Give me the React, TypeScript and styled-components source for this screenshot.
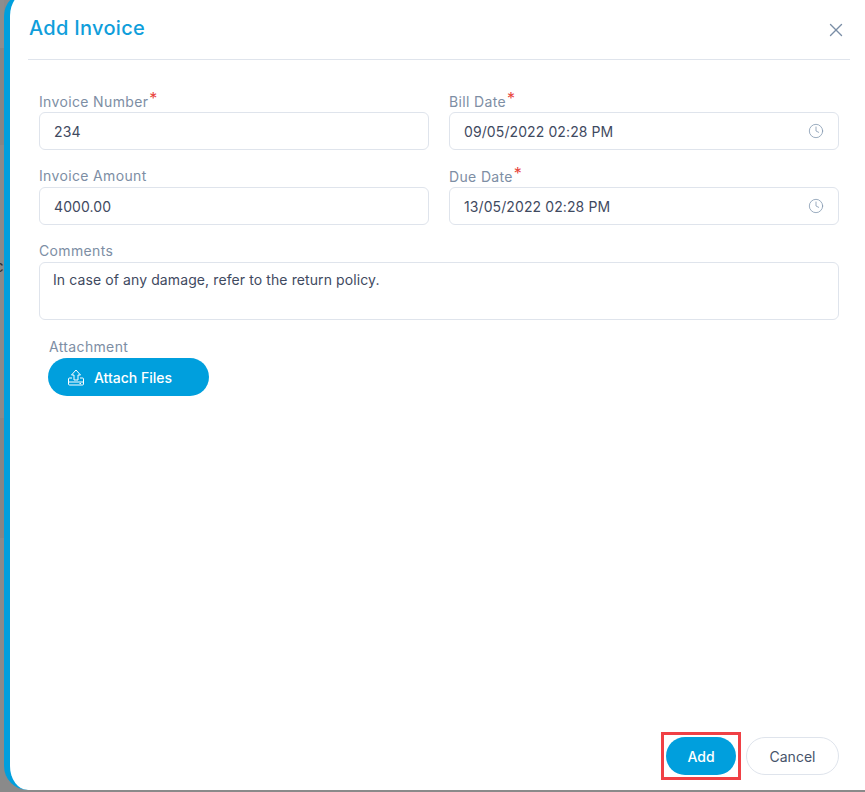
import React from 'react'
import styled, { createGlobalStyle } from 'styled-components'
import { Clock, X } from 'lucide-react'

const FONT = `"Inter", "Noto Sans", "Liberation Sans", sans-serif`

const GlobalStyle = createGlobalStyle`
  html, body {
    margin: 0;
    padding: 0;
    height: 100%;
    overflow: hidden;
    background: #8a8a8a;
  }
  * {
    box-sizing: border-box;
  }
`

const UploadIcon = () => (
  <svg width="16" height="17" viewBox="0 0 16 17" fill="none" stroke="#fff" strokeWidth="1">
    <path d="M8 1 L12.5 6 H10 V11 H6 V6 H3.5 Z" strokeLinejoin="round" />
    <path d="M4 9 H1.5 Q0.5 9 0.5 10 V15 Q0.5 16 1.5 16 H14.5 Q15.5 16 15.5 15 V10 Q15.5 9 14.5 9 H12" />
    <path d="M1 13 H15 M11.5 14.5 H13" />
  </svg>
)

const Field = ({ label, required, value, withClock }: { label: string; required?: boolean; value: string; withClock?: boolean }) => (
  <FieldWrap>
    <Label>
      {label}
      {required && <Star>*</Star>}
    </Label>
    <InputBox>
      <InputText>{value}</InputText>
      {withClock && <Clock size={16} strokeWidth={1.2} color="#8398b0" />}
    </InputBox>
  </FieldWrap>
)

const App = () => {
  return (
    <>
      <GlobalStyle />
      <Page>
        <Backdrop>
          <BackdropGlyph>c</BackdropGlyph>
        </Backdrop>
        <Drawer>
          <Header>
            <Title>Add Invoice</Title>
            <CloseButton>
              <X size={22} strokeWidth={1.5} color="#7a8ea6" />
            </CloseButton>
          </Header>
          <Form>
            <FieldGrid>
              <Field label="Invoice Number" required value="234" />
              <Field label="Bill Date" required value="09/05/2022 02:28 PM" withClock />
              <Field label="Invoice Amount" value="4000.00" />
              <Field label="Due Date" required value="13/05/2022 02:28 PM" withClock />
            </FieldGrid>
            <CommentsWrap>
              <Label>Comments</Label>
              <TextArea>In case of any damage, refer to the return policy.</TextArea>
            </CommentsWrap>
            <Attachment>
              <AttachmentLabel>Attachment</AttachmentLabel>
              <AttachButton>
                <UploadIcon />
                Attach Files
              </AttachButton>
            </Attachment>
          </Form>
          <Footer>
            <Highlight>
              <AddButton>Add</AddButton>
            </Highlight>
            <CancelButton>Cancel</CancelButton>
          </Footer>
        </Drawer>
      </Page>
    </>
  )
}

const Page = styled.div`
  position: relative;
  width: 865px;
  height: 792px;
  padding-left: 4px;
  overflow: hidden;
  background: #8a8a8a;
  font-family: ${FONT};
`

const Backdrop = styled.div`
  position: absolute;
  left: 0;
  top: 0;
  width: 4px;
  height: 100%;
  overflow: hidden;
  background: linear-gradient(
    to bottom,
    #8d8d8d 0 48px,
    #858585 48px 145px,
    #8a8a8a 145px 418px,
    #858585 418px 538px,
    #8a8a8a 538px
  );
`

const BackdropGlyph = styled.span`
  position: absolute;
  left: -5px;
  top: 258px;
  font-size: 15px;
  line-height: 18px;
  color: #2d2d33;
`

const Drawer = styled.div`
  display: flex;
  flex-direction: column;
  width: 861px;
  height: 798px;
  margin-top: -8px;
  border-left: 6px solid #009fdd;
  border-radius: 24px 0 0 24px;
  background: #fff;
`

const Header = styled.header`
  display: flex;
  align-items: center;
  justify-content: space-between;
  height: 60px;
  margin: 8px 15px 0 18px;
  padding: 0 1px 4px 1px;
  border-bottom: 1px solid #dfe4ec;
`

const Title = styled.h1`
  margin: 0;
  font-size: 20px;
  line-height: 30px;
  font-weight: 500;
  letter-spacing: 0.3px;
  color: #0f9edb;
`

const CloseButton = styled.span`
  display: flex;
  margin: 4px 2px 0 0;
`

const Form = styled.div`
  display: flex;
  flex-direction: column;
  padding: 30px 26px 0 29px;
`

const FieldGrid = styled.div`
  display: grid;
  grid-template-columns: 390px 390px;
  column-gap: 20px;
  row-gap: 15px;
`

const FieldWrap = styled.div`
  display: flex;
  flex-direction: column;
`

const Label = styled.label`
  display: block;
  height: 22px;
  font-size: 14px;
  line-height: 22px;
  letter-spacing: 0.35px;
  color: #7d8ea4;
`

const Star = styled.span`
  position: relative;
  top: -3px;
  margin-left: 1px;
  font-size: 16px;
  color: #e8453c;
`

const InputBox = styled.div`
  display: flex;
  align-items: center;
  justify-content: space-between;
  height: 38px;
  padding: 0 14px;
  border: 1px solid #dfe4ec;
  border-radius: 6px;
  background: #fff;
`

const InputText = styled.span`
  font-size: 14px;
  letter-spacing: 0.1px;
  color: #3f4a5f;
`

const CommentsWrap = styled.div`
  display: flex;
  flex-direction: column;
  margin-top: 15px;
`

const TextArea = styled.div`
  height: 58px;
  padding: 7px 13px;
  border: 1px solid #dfe4ec;
  border-radius: 6px;
  font-size: 14px;
  line-height: 20px;
  letter-spacing: 0.1px;
  color: #3f4a5f;
`

const Attachment = styled.div`
  display: flex;
  flex-direction: column;
  align-items: flex-start;
  margin: 16px 0 0 9px;
`

const AttachmentLabel = styled.span`
  height: 22px;
  padding-left: 1px;
  font-size: 14px;
  line-height: 22px;
  letter-spacing: 0.35px;
  color: #7d8ea4;
`

const PillButton = styled.button`
  height: 38px;
  border-radius: 19px;
  font-family: ${FONT};
  font-size: 14px;
  font-weight: 500;
`

const AttachButton = styled(PillButton)`
  display: flex;
  align-items: center;
  gap: 10px;
  width: 161px;
  padding: 0 0 0 20px;
  border: none;
  background: #009fdd;
  color: #fff;
`

const Footer = styled.footer`
  display: flex;
  align-items: center;
  justify-content: flex-end;
  gap: 5px;
  margin-top: auto;
  padding: 0 26px 10px 0;
`

const Highlight = styled.span`
  display: flex;
  padding: 2px;
  border: 3px solid #f04045;
`

const AddButton = styled(PillButton)`
  width: 70px;
  border: none;
  background: #009fdd;
  color: #fff;
`

const CancelButton = styled(PillButton)`
  width: 93px;
  border: 1px solid #dfe4ec;
  background: #fff;
  color: #47546b;
  font-weight: 400;
`

export default App
